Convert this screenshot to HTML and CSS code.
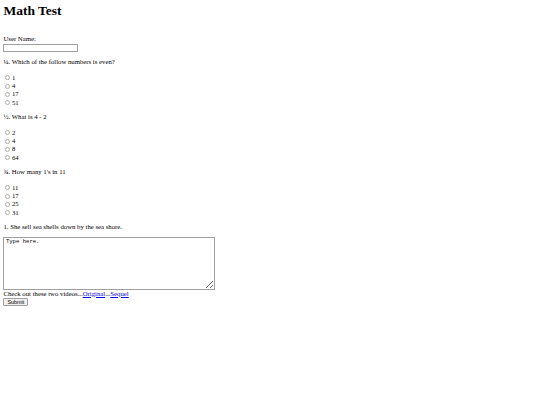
FILE: index.html
```html
<!DOCTYPE html>
<html lang="en">
<head>
    <meta charset="UTF-8">
    <meta name="viewport" content="width=device-width, initial-scale=1.0">
    <title>Math Test</title>
    <link rel="stylesheet" href="styles.css">
</head>
<body>
    <h1>Math Test</h1>
    <form class="test">
        <div class="field-label">User Name:</div>
        <input class="name-box" type="text" name="username">

        <p class="question">&frac14;. Which of the follow numbers is even?</p>
        <label class="option"><input type="radio" name="q1" value="1">1</label>
        <label class="option"><input type="radio" name="q1" value="4">4</label>
        <label class="option"><input type="radio" name="q1" value="17">17</label>
        <label class="option"><input type="radio" name="q1" value="51">51</label>

        <p class="question">&frac12;. What is 4 - 2</p>
        <label class="option"><input type="radio" name="q2" value="2">2</label>
        <label class="option"><input type="radio" name="q2" value="4">4</label>
        <label class="option"><input type="radio" name="q2" value="8">8</label>
        <label class="option"><input type="radio" name="q2" value="64">64</label>

        <p class="question">&frac34;. How many 1's in 11</p>
        <label class="option"><input type="radio" name="q3" value="11">11</label>
        <label class="option"><input type="radio" name="q3" value="17">17</label>
        <label class="option"><input type="radio" name="q3" value="25">25</label>
        <label class="option"><input type="radio" name="q3" value="31">31</label>

        <p class="question written">1. She sell sea shells down by the sea shore.</p>
        <textarea class="answer" name="answer">Type here.</textarea>
        <div class="videos">Check out these two videos...<a href="#">Original</a>...<a href="#">Sequel</a></div>
        <input class="submit" type="submit" value="Submit">
    </form>
</body>
</html>
```

FILE: styles.css
```css
body {
    margin: 0;
    padding: 0 3.4px;
    font-family: "Liberation Serif", "Times New Roman", serif;
    font-size: 6.75px;
    line-height: 8.4px;
    color: #000;
    background-color: #fff;
}
h1 {
    font-size: 13.5px;
    line-height: 15px;
    margin: 3px 0 17.3px;
}
.name-box {
    display: block;
    box-sizing: border-box;
    width: 75px;
    height: 8.5px;
    margin: 0;
    padding: 0;
    border: 1px solid #a0a0a0;
    background-color: #fff;
}
.question {
    margin: 6px 0 7px;
}
.question.written {
    margin-bottom: 5px;
}
.option {
    display: flex;
    align-items: center;
    height: 8.4px;
}
.option input {
    appearance: none;
    box-sizing: border-box;
    width: 5px;
    height: 5px;
    margin: 0 1.5px 0 2px;
    border: 1px solid #b0b0b0;
    border-radius: 50%;
    background-color: #fff;
}
.answer {
    display: block;
    box-sizing: border-box;
    width: 212px;
    height: 53px;
    margin: 0;
    padding: 1px 1.5px;
    border: 1px solid #a0a0a0;
    font-family: "Liberation Mono", monospace;
    font-size: 5.6px;
    line-height: 6.5px;
    color: #000;
}
.videos a {
    color: #0000ee;
}
.submit {
    display: block;
    box-sizing: border-box;
    width: 25px;
    height: 8px;
    margin: 0;
    padding: 0;
    border: 1px solid #a0a0a0;
    border-radius: 1px;
    background-color: #efefef;
    font-family: "Liberation Sans", Arial, sans-serif;
    font-size: 5.4px;
    line-height: 6px;
    color: #000;
}
```
